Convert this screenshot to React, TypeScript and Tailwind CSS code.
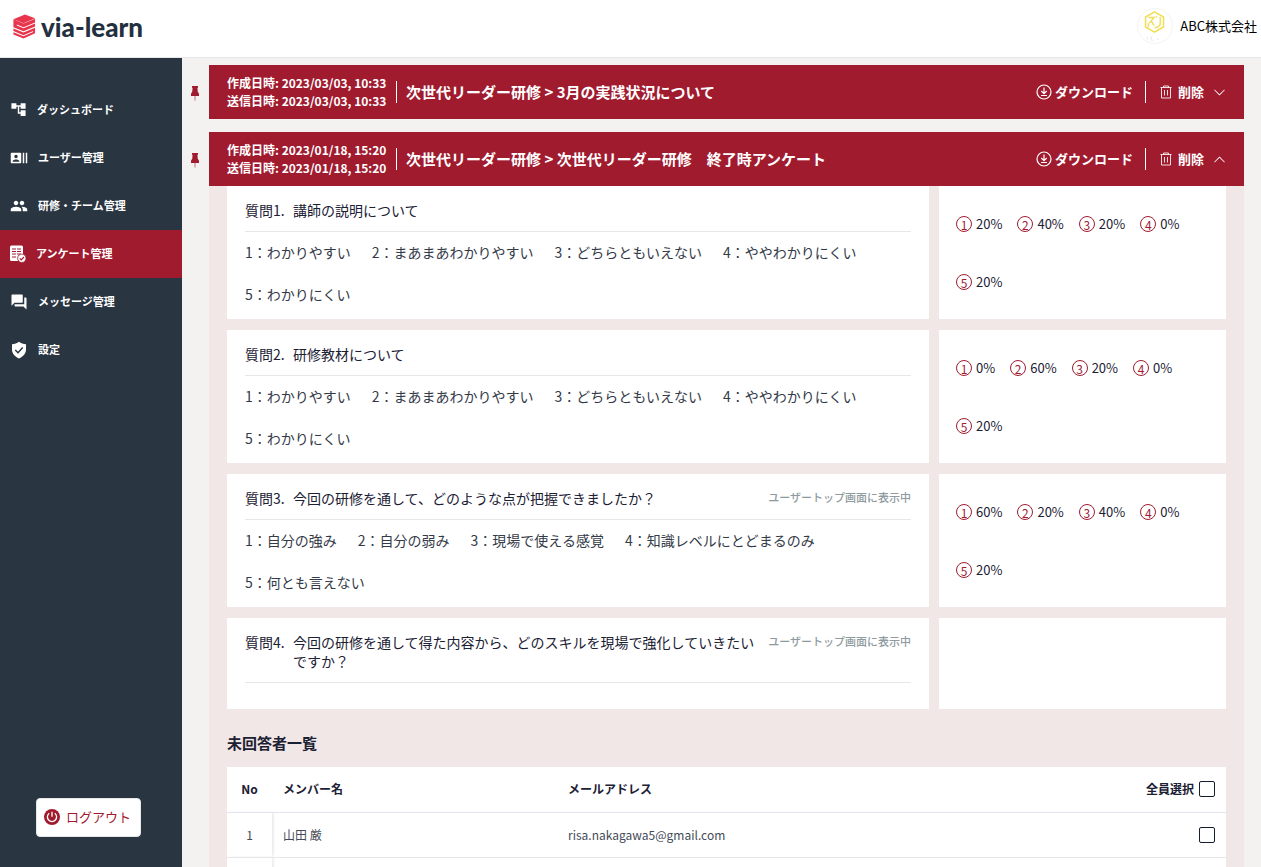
import { useState, type ReactNode } from 'react';
import clsx from 'clsx';
import { BsChevronDown, BsChevronUp } from 'react-icons/bs';
import { MdAccountTree, MdForum, MdGroup, MdRecentActors } from 'react-icons/md';

interface Question {
  title: string;
  pinned?: boolean;
  options: string[];
  results: number[];
}

interface Survey {
  createdAt: string;
  sentAt: string;
  title: string;
}

const surveys: Survey[] = [
  {
    createdAt: '2023/03/03, 10:33',
    sentAt: '2023/03/03, 10:33',
    title: '次世代リーダー研修 > 3月の実践状況について',
  },
  {
    createdAt: '2023/01/18, 15:20',
    sentAt: '2023/01/18, 15:20',
    title: '次世代リーダー研修 > 次世代リーダー研修　終了時アンケート',
  },
];

const levels = [
  'わかりやすい',
  'まあまあわかりやすい',
  'どちらともいえない',
  'ややわかりにくい',
  'わかりにくい',
];

const questions: Question[] = [
  { title: '講師の説明について', options: levels, results: [20, 40, 20, 0, 20] },
  { title: '研修教材について', options: levels, results: [0, 60, 20, 0, 20] },
  {
    title: '今回の研修を通して、どのような点が把握できましたか？',
    pinned: true,
    options: [
      '自分の強み',
      '自分の弱み',
      '現場で使える感覚',
      '知識レベルにとどまるのみ',
      '何とも言えない',
    ],
    results: [60, 20, 40, 0, 20],
  },
  {
    title: '今回の研修を通して得た内容から、どのスキルを現場で強化していきたいですか？',
    pinned: true,
    options: [],
    results: [],
  },
];

const members = [{ name: '山田 厳', email: 'risa.nakagawa5@gmail.com' }];

function LogoMark() {
  return (
    <svg viewBox="0 0 24 26" className="h-[25px] w-6" fill="#e8354d">
      <path d="M13 0.500 23.500 4.500 11.500 9.500 1 5.500Z" />
      <path d="M1 5.500 11.500 10 23.500 5V8.800L11.500 13.800 4.500 11V12L11.500 14.800 23.500 10V13L11.500 18 1 13.800Z" />
      <path d="M1 15 11.500 19.200 23.500 14.200V20L11.500 25.500 1 21.200V19L11.500 23.200 21.500 18.700V17.600L11.500 22 1 17.800Z" />
    </svg>
  );
}

function SurveyIcon() {
  return (
    <svg viewBox="0 0 16 18" className="h-[18px] w-4" fill="none">
      <path d="M1.500 0.500h10A1.500 1.500 0 0 1 13 2v8H8v6H1.500A1.500 1.500 0 0 1 0 14.500V2A1.500 1.500 0 0 1 1.500 0.500Z" fill="white" />
      <path d="M2 4h4M7 4h4M2 6.500h4M7 6.500h4M2 9h4M7 9h4M2 12h4" stroke="#a11b2f" />
      <circle cx="11.800" cy="13.300" r="4.200" fill="white" stroke="#a11b2f" strokeWidth="0.800" />
      <path d="m9.800 13.300 1.500 1.500 2.600-2.800" stroke="#a11b2f" strokeWidth="1.200" />
    </svg>
  );
}

function ShieldIcon() {
  return (
    <svg viewBox="0 0 18 18" className="size-[18px]" fill="none">
      <path d="M9 0.800c2 1.500 4.300 2.300 7 2.400v5.300c0 4-2.700 7-7 8.900-4.300-1.900-7-4.900-7-8.900V3.200c2.700-0.100 5-0.900 7-2.400Z" fill="white" />
      <path d="m5.300 9 2.700 2.700L12.700 6.500" stroke="#293541" strokeWidth="1.500" />
    </svg>
  );
}

function PinIcon() {
  return (
    <svg viewBox="0 0 8 15" className="h-[15px] w-2" fill="#a11b2f">
      <path d="M1 0h6v1.800H6.400L6.800 6C7.600 6.600 8 7.400 8 8.300v1.700H0V8.300C0 7.400 0.400 6.600 1.200 6L1.600 1.800H1Z" />
      <path d="M3.500 10h1V14.500h-1Z" opacity="0.600" />
    </svg>
  );
}

function DownloadIcon() {
  return (
    <svg viewBox="0 0 16 16" className="size-4" fill="none" stroke="white" strokeWidth="1.200">
      <circle cx="8" cy="8" r="7" />
      <path d="M8 3.500v6M5.300 7 8 9.700 10.700 7M5 11.500h6" />
    </svg>
  );
}

function TrashIcon() {
  return (
    <svg viewBox="0 0 12 14" className="h-3.5 w-3" fill="none" stroke="white" strokeOpacity="0.850">
      <path d="M0.500 2.500h11M3.500 2.500v-1.500h5v1.500M1.500 2.500V13h9V2.500M4.500 5v5.500M7.500 5v5.500" />
    </svg>
  );
}

function PowerIcon() {
  return (
    <svg viewBox="0 0 16 16" className="size-4" fill="none">
      <circle cx="8" cy="8" r="8" fill="#a11b2f" />
      <path d="M5.200 4.300a4.600 4.600 0 1 0 5.600 0M8 2.800v5" stroke="white" strokeWidth="1.300" />
    </svg>
  );
}

function CompanyMark() {
  return (
    <svg viewBox="0 0 36 36" className="size-9 rounded-full border border-gray-100" fill="none">
      <path d="m17.500 3 9.500 5.500v10.500l-9.500 5.500L8 19V8.500Z" stroke="#f0df55" strokeWidth="1.600" />
      <path d="M11 9h6l-5 6M14 12.500l3 5M11 15v4M23.500 8.500v8l-3 3h-3M19.500 7.500v1.500" stroke="#f0df55" strokeWidth="1.500" />
      <path d="M10 29.500v3M14 29v4h2M20 32h2" stroke="#e5e5e5" />
    </svg>
  );
}

const navItems: { label: string; icon: ReactNode; active?: boolean }[] = [
  { label: 'ダッシュボード', icon: <MdAccountTree size={17} /> },
  { label: 'ユーザー管理', icon: <MdRecentActors size={18} /> },
  { label: '研修・チーム管理', icon: <MdGroup size={18} /> },
  { label: 'アンケート管理', icon: <SurveyIcon />, active: true },
  { label: 'メッセージ管理', icon: <MdForum size={18} /> },
  { label: '設定', icon: <ShieldIcon /> },
];

function Sidebar() {
  return (
    <aside className="flex w-[182px] shrink-0 flex-col justify-between bg-[#293541] pt-7 pb-[30px]">
      <nav>
        {navItems.map((item) => (
          <a
            key={item.label}
            href="#"
            className={clsx(
              'flex h-12 items-center gap-2.5 pb-px pl-2.5 text-[11px] font-bold text-white',
              item.active && 'bg-[#a11b2f]'
            )}
          >
            {item.icon}
            {item.label}
          </a>
        ))}
      </nav>
      <button className="ml-9 flex h-[39px] w-[105px] items-center gap-1.5 rounded border border-gray-200 bg-white pb-0.5 pl-[7px] text-[13px] text-[#a11b2f]">
        <PowerIcon />
        ログアウト
      </button>
    </aside>
  );
}

function SurveyBar({ survey, open, onToggle }: { survey: Survey; open: boolean; onToggle: () => void }) {
  const Chevron = open ? BsChevronUp : BsChevronDown;
  return (
    <div className="flex items-center">
      <div className="w-[27px] shrink-0 pt-[3px] pl-[9px]">
        <PinIcon />
      </div>
      <div className="flex h-[54px] flex-1 items-center bg-[#a11b2f] px-[18px] text-white">
        <div className="min-w-40 text-[12px] leading-[18px] font-bold">
          <p>作成日時: {survey.createdAt}</p>
          <p>送信日時: {survey.sentAt}</p>
        </div>
        <div className="mx-[9px] h-[22px] w-px bg-white" />
        <h2 className="flex-1 text-[15px] font-bold">{survey.title}</h2>
        <button className="flex items-center gap-[3px] text-[13px] font-bold">
          <DownloadIcon />
          ダウンロード
        </button>
        <div className="mr-3.5 ml-3 h-[22px] w-px bg-white" />
        <button className="flex items-center gap-1.5 text-[13px] font-bold">
          <TrashIcon />
          削除
        </button>
        <button className="ml-[9px]" aria-label="開閉" onClick={onToggle}>
          <Chevron size={13} />
        </button>
      </div>
    </div>
  );
}

function QuestionRow({ index, question }: { index: number; question: Question }) {
  return (
    <div className="flex gap-2.5">
      <section className="flex-1 bg-white px-[18px] pt-[15px] pb-1">
        <div className="flex items-start border-b border-gray-200 pb-[11px] text-[14px] leading-[19px] text-[#1b2033]">
          <h3 className="w-12 shrink-0">質問{index}.</h3>
          <p className="flex-1">{question.title}</p>
          {question.pinned && (
            <span className="ml-2 shrink-0 text-[11px] leading-4 font-medium text-[#8f9a9f]">
              ユーザートップ画面に表示中
            </span>
          )}
        </div>
        <ol className="flex min-h-[22px] flex-wrap gap-x-[21px] gap-y-0.5 text-[14px] leading-10 text-[#343a48]">
          {question.options.map((option, i) => (
            <li key={option}>
              {i + 1}：{option}
            </li>
          ))}
        </ol>
      </section>
      <section className="w-[287px] shrink-0 bg-white px-[17px] pt-[9px] pb-2">
        <ol className="flex flex-wrap gap-x-[15px] text-[13px] leading-[58px] text-[#1b2033]">
          {question.results.map((value, i) => (
            <li key={i} className="flex items-center gap-1">
              <span className="flex size-4 items-center justify-center rounded-full border border-[#a11b2f] pt-px text-[12px] leading-none text-[#a11b2f]">
                {i + 1}
              </span>
              {value}%
            </li>
          ))}
        </ol>
      </section>
    </div>
  );
}

function Checkbox({ id, label }: { id: string; label?: string }) {
  return (
    <input
      id={id}
      type="checkbox"
      aria-label={label}
      className="size-4 appearance-none rounded-[2px] border border-[#14202f] bg-white checked:bg-[#a11b2f]"
    />
  );
}

function MemberTable() {
  return (
    <table className="w-full table-fixed border-collapse bg-white text-left text-[12px] text-[#1b2033]">
      <thead>
        <tr className="h-[45px] border-b border-[#e4e4ee]">
          <th className="w-[45px] text-center font-bold">No</th>
          <th className="w-[285px] pl-[11px] font-bold">メンバー名</th>
          <th className="pl-[11px] font-bold">メールアドレス</th>
          <th className="w-32 pr-[11px] font-bold">
            <div className="flex items-center justify-end gap-[5px]">
              <label htmlFor="select-all">全員選択</label>
              <Checkbox id="select-all" />
            </div>
          </th>
        </tr>
      </thead>
      <tbody className="text-[#454b58]">
        {members.map((member, i) => (
          <tr key={member.email} className="h-[45px] border-b border-gray-200">
            <td className="text-center shadow-[2px_0_3px_-1px_rgba(0,0,0,0.12)]">{i + 1}</td>
            <td className="pl-[11px]">{member.name}</td>
            <td className="pl-[11px]">{member.email}</td>
            <td className="pr-[11px]">
              <div className="flex justify-end">
                <Checkbox id={`member-${i}`} label={member.name} />
              </div>
            </td>
          </tr>
        ))}
        {/* spacer row below the last member */}
        <tr className="h-[45px]" aria-hidden="true">
          <td className="shadow-[2px_0_3px_-1px_rgba(0,0,0,0.12)]" />
          <td colSpan={3} />
        </tr>
      </tbody>
    </table>
  );
}

export default function App() {
  const [openIndex, setOpenIndex] = useState(1);

  return (
    <div className="flex h-screen flex-col overflow-hidden bg-[#f3f2f0] font-['Noto_Sans_CJK_JP',sans-serif]">
      <header className="flex h-[58px] shrink-0 items-center justify-between border-b border-gray-200 bg-white pr-1 pb-1.5 pl-3">
        <a href="#" className="flex items-center gap-[5px] pt-0.5 text-[#22303f]">
          <LogoMark />
          <span className="font-[Lato] text-[26px] leading-none font-black">via-learn</span>
        </a>
        <div className="flex items-center gap-[7px] text-[13px] text-black">
          <CompanyMark />
          ABC株式会社
        </div>
      </header>
      <div className="flex min-h-0 flex-1">
        <Sidebar />
        <main className="flex flex-1 flex-col gap-[13px] overflow-hidden pt-[7px] pr-[17px]">
          {surveys.map((survey, i) => (
            <div key={survey.createdAt}>
              <SurveyBar
                survey={survey}
                open={openIndex === i}
                onToggle={() => setOpenIndex(openIndex === i ? -1 : i)}
              />
              {openIndex === i && (
                <div className="ml-[27px] bg-[#f0e7e6] px-[18px]">
                  <div className="flex flex-col gap-[11px]">
                    {questions.map((question, n) => (
                      <QuestionRow key={question.title} index={n + 1} question={question} />
                    ))}
                  </div>
                  <h3 className="pt-[22px] pb-3 text-[15px] leading-6 font-bold text-[#1b2033]">未回答者一覧</h3>
                  <MemberTable />
                </div>
              )}
            </div>
          ))}
        </main>
      </div>
    </div>
  );
}
